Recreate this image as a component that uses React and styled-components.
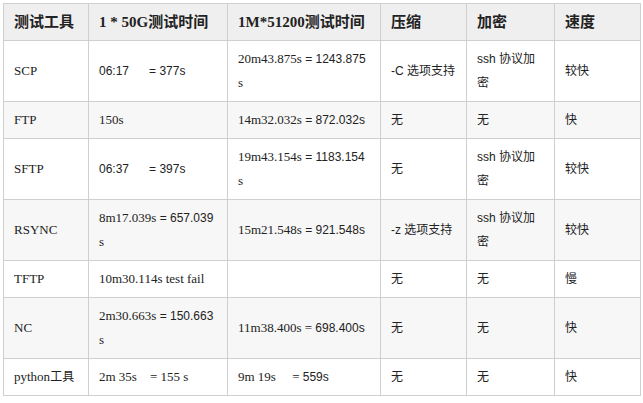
import React from 'react';
import styled, { createGlobalStyle } from 'styled-components';

const GlobalStyle = createGlobalStyle`
  body {
    margin: 0;
    background: #fff;
  }
`

const Page = styled.div`
  padding: 3px;
  width: 643px;
  box-sizing: border-box;
`

const Table = styled.table`
  border-collapse: collapse;
  table-layout: fixed;
  width: 637px;
  color: #222;
  font-family: "Liberation Serif", "Noto Sans CJK SC", serif;
  font-size: 13px;
`

const Th = styled.th`
  background: #efefef;
  border: 1px solid #cfcfcf;
  padding: 6px 10px;
  height: 24px;
  line-height: 24px;
  font-size: 15px;
  font-weight: bold;
  text-align: left;
  white-space: nowrap;
`

const Row = styled.tr`
  background: ${(p) => (p.$shaded ? '#f7f7f7' : '#fff')};
`

const Td = styled.td`
  border: 1px solid #cfcfcf;
  padding: 6px 10px;
  line-height: 24px;
  vertical-align: middle;
  white-space: nowrap;
`

const Sans = styled.span`
  font-family: "Liberation Sans", "Noto Sans CJK SC", sans-serif;
  font-size: 12px;
  line-height: 1;
`

const Cjk = styled.span`
  font-family: "Noto Sans CJK SC", sans-serif;
  font-size: 12px;
  line-height: 1;
`

const rows = [
  {
    tool: 'SCP',
    a: <Sans>06:17&nbsp;&nbsp;&nbsp;&nbsp;&nbsp; = 377s</Sans>,
    b: <>20m43.875s <Sans>= 1243.875</Sans><br />s</>,
    zip: <><Sans>-C</Sans> <Cjk>选项支持</Cjk></>,
    enc: <><Sans>ssh</Sans> <Cjk>协议加</Cjk><br /><Cjk>密</Cjk></>,
    speed: '较快',
  },
  {
    tool: 'FTP',
    a: '150s',
    b: <>14m32.032s <Sans>= 872.032s</Sans></>,
    zip: '无',
    enc: '无',
    speed: '快',
  },
  {
    tool: 'SFTP',
    a: <Sans>06:37&nbsp;&nbsp;&nbsp;&nbsp;&nbsp; = 397s</Sans>,
    b: <>19m43.154s <Sans>= 1183.154</Sans><br />s</>,
    zip: '无',
    enc: <><Sans>ssh</Sans> <Cjk>协议加</Cjk><br /><Cjk>密</Cjk></>,
    speed: '较快',
  },
  {
    tool: 'RSYNC',
    a: <>8m17.039s <Sans>= 657.039</Sans><br />s</>,
    b: <>15m21.548s <Sans>= 921.548s</Sans></>,
    zip: <><Sans>-z</Sans> <Cjk>选项支持</Cjk></>,
    enc: <><Sans>ssh</Sans> <Cjk>协议加</Cjk><br /><Cjk>密</Cjk></>,
    speed: '较快',
  },
  {
    tool: 'TFTP',
    a: '10m30.114s test fail',
    b: '',
    zip: '无',
    enc: '无',
    speed: '慢',
  },
  {
    tool: 'NC',
    a: <>2m30.663s <Sans>= 150.663</Sans><br />s</>,
    b: <>11m38.400s = <Sans>698.400s</Sans></>,
    zip: '无',
    enc: '无',
    speed: '快',
  },
  {
    tool: <>python<Cjk>工具</Cjk></>,
    a: <>2m 35s&nbsp;&nbsp;&nbsp; = 155 s</>,
    b: <>9m 19s&nbsp;&nbsp;&nbsp;&nbsp; = <Sans>559s</Sans></>,
    zip: '无',
    enc: '无',
    speed: '快',
  },
]

const wrapCjk = (v) => (typeof v === 'string' && /[\u4e00-\u9fff]/.test(v) ? <Cjk>{v}</Cjk> : v)

export default function App() {
  return (
    <>
      <GlobalStyle />
      <Page>
        <Table>
          <colgroup>
            <col style={{ width: 85 }} />
            <col style={{ width: 139 }} />
            <col style={{ width: 153 }} />
            <col style={{ width: 86 }} />
            <col style={{ width: 88 }} />
            <col style={{ width: 86 }} />
          </colgroup>
          <thead>
            <tr>
              <Th>测试工具</Th>
              <Th>1 * 50G测试时间</Th>
              <Th>1M*51200测试时间</Th>
              <Th>压缩</Th>
              <Th>加密</Th>
              <Th>速度</Th>
            </tr>
          </thead>
          <tbody>
            {rows.map((r, i) => (
              <Row key={i} $shaded={i % 2 === 1}>
                <Td>{r.tool}</Td>
                <Td>{r.a}</Td>
                <Td>{r.b}</Td>
                <Td>{wrapCjk(r.zip)}</Td>
                <Td>{wrapCjk(r.enc)}</Td>
                <Td>{wrapCjk(r.speed)}</Td>
              </Row>
            ))}
          </tbody>
        </Table>
      </Page>
    </>
  )
}
